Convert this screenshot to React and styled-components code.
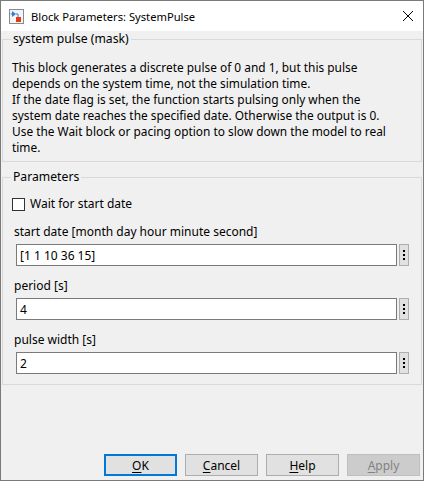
import React from "react";
import styled, { createGlobalStyle } from "styled-components";

const Global = createGlobalStyle`
  html, body { margin: 0; padding: 0; background: #ffffff; }
  body { font-family: "Noto Sans", "Open Sans", sans-serif; }
  * { box-sizing: border-box; }
`;

const Window = styled.div`
  width: 424px;
  height: 481px;
  border: 1px solid #7a7a7a;
  background: #f0f0f0;
  display: flex;
  flex-direction: column;
  font-family: "Noto Sans", "Open Sans", sans-serif;
  font-size: 12px;
  color: #000;
  overflow: hidden;
`;

const TitleBar = styled.div`
  height: 30px;
  background: #ffffff;
  display: flex;
  align-items: center;
  padding-left: 8px;
  padding-right: 9px;
  flex-shrink: 0;
`;

const TitleText = styled.span`
  margin-left: 7px;
  font-size: 11.2px;
  flex: 1;
  white-space: nowrap;
`;

const Body = styled.div`
  flex: 1;
  display: flex;
  flex-direction: column;
  padding: 0 1px 0 1px;
`;

const Group = styled.fieldset`
  margin: ${(p) => p.$top}px 0 0 0;
  padding: ${(p) => p.$padTop}px 10px ${(p) => p.$padBottom}px 10px;
  border: 1px solid #d9d9d9;
  min-width: 0;
`;

const Legend = styled.legend`
  padding: 0 2px;
  margin-left: -2px;
  line-height: 16px;
  font-size: 12.2px;
`;

const Description = styled.div`
  margin-left: -1px;
  line-height: 16px;
  font-size: 11.9px;
`;

const Line = styled.div`
  white-space: nowrap;
`;

const CheckRow = styled.label`
  display: flex;
  align-items: center;
  gap: 5px;
  margin-left: -1px;
  line-height: 16px;
  height: 16px;
`;

const CheckBox = styled.span`
  width: 13px;
  height: 13px;
  border: 1px solid #333333;
  background: #ffffff;
  display: inline-block;
`;

const Field = styled.div`
  display: flex;
  flex-direction: column;
  margin-top: 12px;
`;

const FieldLabel = styled.div`
  margin-left: 1px;
  line-height: 16px;
  margin-bottom: 4px;
  white-space: nowrap;
`;

const InputRow = styled.div`
  display: flex;
  gap: 2px;
  padding: 0 2px 0 3px;
`;

const TextInput = styled.div`
  flex: 1;
  height: 22px;
  border: 1px solid #7a7a7a;
  background: #ffffff;
  display: flex;
  align-items: center;
  padding-left: 3px;
  font-size: 12px;
`;

const MoreButton = styled.div`
  width: 10px;
  height: 22px;
  border: 1px solid #adadad;
  background: #e1e1e1;
  display: flex;
  flex-direction: column;
  align-items: center;
  justify-content: center;
  gap: 2px;
`;

const Dot = styled.span`
  width: 2px;
  height: 2px;
  background: #000;
`;

const ButtonRow = styled.div`
  margin-top: auto;
  display: flex;
  justify-content: flex-end;
  gap: 8px;
  padding: 0 2px 4px 0;
`;

const Button = styled.div`
  width: 73px;
  height: 22px;
  display: flex;
  align-items: center;
  justify-content: center;
  font-size: 12px;
  background: ${(p) => (p.$disabled ? "#cccccc" : "#e1e1e1")};
  color: ${(p) => (p.$disabled ? "#838383" : "#000000")};
  border: ${(p) =>
    p.$default ? "2px solid #0078d7" : p.$disabled ? "1px solid #bfbfbf" : "1px solid #adadad"};
  u { text-decoration-thickness: 1px; text-underline-offset: 2px; }
`;

const BlockIcon = () => (
  <svg width="15" height="15" viewBox="0 0 15 15">
    <rect x="0.5" y="0.5" width="14" height="14" fill="#f4f4f4" stroke="#8a8a8a" />
    <path d="M3 2 L3 8 L7 5 Z" fill="#2f7fd0" />
    <path d="M1.5 5 H3 M7 5 H9 V8" stroke="#2f7fd0" strokeWidth="1" fill="none" />
    <rect x="7" y="8" width="5" height="5" fill="#e0391c" />
  </svg>
);

const CloseIcon = () => (
  <svg width="12" height="12" viewBox="0 0 12 12">
    <path d="M1 1 L11 11 M11 1 L1 11" stroke="#000" strokeWidth="1" />
  </svg>
);

const Dots = () => (
  <MoreButton>
    <Dot />
    <Dot />
    <Dot />
  </MoreButton>
);

const fields = [
  { label: "start date [month day hour minute second]", value: "[1 1 10 36 15]" },
  { label: "period [s]", value: "4" },
  { label: "pulse width [s]", value: "2" },
];

export default function App() {
  return (
    <>
      <Global />
      <Window>
        <TitleBar>
          <BlockIcon />
          <TitleText>Block Parameters: SystemPulse</TitleText>
          <CloseIcon />
        </TitleBar>
        <Body>
          <Group $top={0} $padTop={12} $padBottom={6}>
            <Legend>system pulse (mask)</Legend>
            <Description>
              <Line>This block generates a discrete pulse of 0 and 1, but this pulse</Line>
              <Line>depends on the system time, not the simulation time.</Line>
              <Line>If the date flag is set, the function starts pulsing only when the</Line>
              <Line>system date reaches the specified date. Otherwise the output is 0.</Line>
              <Line>Use the Wait block or pacing option to slow down the model to real</Line>
              <Line>time.</Line>
            </Description>
          </Group>
          <Group $top={7} $padTop={11} $padBottom={10}>
            <Legend>Parameters</Legend>
            <CheckRow>
              <CheckBox />
              <span>Wait for start date</span>
            </CheckRow>
            {fields.map((f) => (
              <Field key={f.label}>
                <FieldLabel>{f.label}</FieldLabel>
                <InputRow>
                  <TextInput>{f.value}</TextInput>
                  <Dots />
                </InputRow>
              </Field>
            ))}
          </Group>
          <ButtonRow>
            <Button $default>
              <span><u>O</u>K</span>
            </Button>
            <Button>
              <span><u>C</u>ancel</span>
            </Button>
            <Button>
              <span><u>H</u>elp</span>
            </Button>
            <Button $disabled>
              <span><u>A</u>pply</span>
            </Button>
          </ButtonRow>
        </Body>
      </Window>
    </>
  );
}
